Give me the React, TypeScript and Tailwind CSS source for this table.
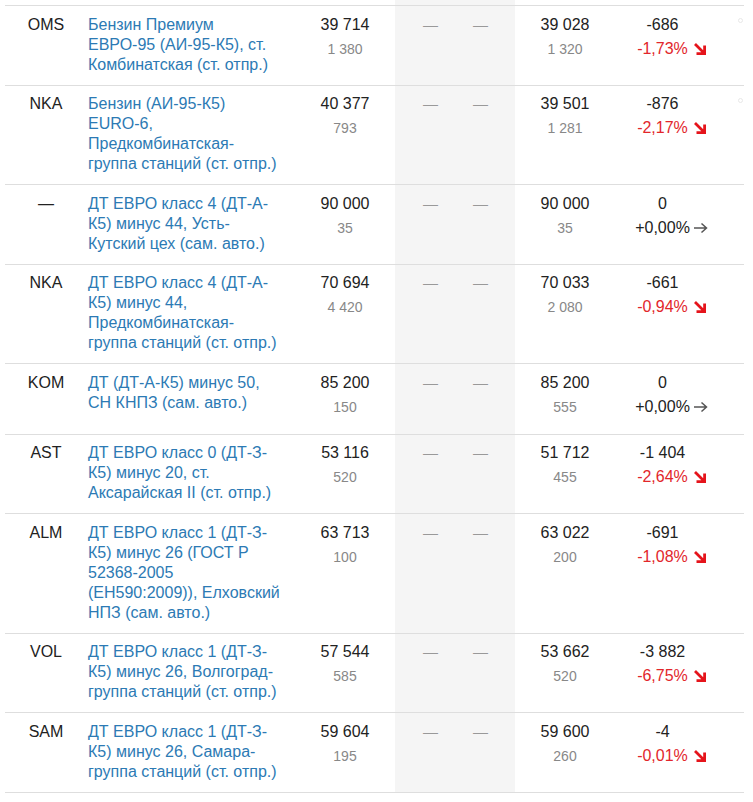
type Row = {
  code: string;
  name: string;
  price: string;
  vol: string;
  newPrice: string;
  newVol: string;
  delta: string;
  pct: string;
  dir: "down" | "flat";
  dot?: boolean;
};

const ROWS: Row[] = [
  { code: "OMS", name: "Бензин Премиум ЕВРО-95 (АИ-95-К5), ст. Комбинатская (ст. отпр.)", price: "39 714", vol: "1 380", newPrice: "39 028", newVol: "1 320", delta: "-686", pct: "-1,73%", dir: "down", dot: true },
  { code: "NKA", name: "Бензин (АИ-95-К5) EURO-6, Предкомбинатская-группа станций (ст. отпр.)", price: "40 377", vol: "793", newPrice: "39 501", newVol: "1 281", delta: "-876", pct: "-2,17%", dir: "down", dot: true },
  { code: "—", name: "ДТ ЕВРО класс 4 (ДТ-А-К5) минус 44, Усть-Кутский цех (сам. авто.)", price: "90 000", vol: "35", newPrice: "90 000", newVol: "35", delta: "0", pct: "+0,00%", dir: "flat" },
  { code: "NKA", name: "ДТ ЕВРО класс 4 (ДТ-А-К5) минус 44, Предкомбинатская-группа станций (ст. отпр.)", price: "70 694", vol: "4 420", newPrice: "70 033", newVol: "2 080", delta: "-661", pct: "-0,94%", dir: "down" },
  { code: "KOM", name: "ДТ (ДТ-А-К5) минус 50, СН КНПЗ (сам. авто.)", price: "85 200", vol: "150", newPrice: "85 200", newVol: "555", delta: "0", pct: "+0,00%", dir: "flat" },
  { code: "AST", name: "ДТ ЕВРО класс 0 (ДТ-З-К5) минус 20, ст. Аксарайская II (ст. отпр.)", price: "53 116", vol: "520", newPrice: "51 712", newVol: "455", delta: "-1 404", pct: "-2,64%", dir: "down" },
  { code: "ALM", name: "ДТ ЕВРО класс 1 (ДТ-З-К5) минус 26 (ГОСТ Р 52368-2005 (ЕН590:2009)), Елховский НПЗ (сам. авто.)", price: "63 713", vol: "100", newPrice: "63 022", newVol: "200", delta: "-691", pct: "-1,08%", dir: "down" },
  { code: "VOL", name: "ДТ ЕВРО класс 1 (ДТ-З-К5) минус 26, Волгоград-группа станций (ст. отпр.)", price: "57 544", vol: "585", newPrice: "53 662", newVol: "520", delta: "-3 882", pct: "-6,75%", dir: "down" },
  { code: "SAM", name: "ДТ ЕВРО класс 1 (ДТ-З-К5) минус 26, Самара-группа станций (ст. отпр.)", price: "59 604", vol: "195", newPrice: "59 600", newVol: "260", delta: "-4", pct: "-0,01%", dir: "down" },
];

function ArrowDown() {
  return (
    <svg width="14" height="14" viewBox="0 0 14 14" className="absolute left-full top-1/2 ml-[5px] -translate-y-1/2">
      <path d="M2 2 L11 11 M3.5 11.6 H11.6 V3.5" fill="none" stroke="#e5141b" strokeWidth="2.8" />
    </svg>
  );
}

function ArrowRight() {
  return (
    <svg width="15" height="12" viewBox="0 0 15 12" className="absolute left-full top-1/2 ml-[3px] -translate-y-1/2">
      <path d="M1 6 H13.5 M8.5 1.5 L13.5 6 L8.5 10.5" fill="none" stroke="#555" strokeWidth="1.5" />
    </svg>
  );
}

function PriceCell({ price, vol }: { price: string; vol: string }) {
  return (
    <div className="w-[100px] shrink-0 pt-[8.5px] pb-[10px] text-center">
      <div className="min-h-[51px]">
        <div className="text-[16px] leading-5 text-[#222]">{price}</div>
        <div className="mt-1 text-[14px] leading-5 text-[#888]">{vol}</div>
      </div>
    </div>
  );
}

function TableRow({ row }: { row: Row }) {
  return (
    <div className="flex border-b border-[#dedede]">
      <div className="w-[82px] shrink-0 pt-[8.5px] pb-[10px] text-center text-[16px] leading-5 text-[#222]">
        {row.code}
      </div>
      <div className="w-[208px] shrink-0 pt-[8.5px] pb-[10px] pl-[1px] pr-[14px] text-[16px] leading-5 text-[#2c7ab4]">
        {row.name}
      </div>
      <PriceCell price={row.price} vol={row.vol} />
      <div className="w-[60px] shrink-0 bg-[#f5f5f5] pt-[8.5px] pl-[28px] text-[15px] leading-5 text-[#999]">—</div>
      <div className="w-[60px] shrink-0 bg-[#f5f5f5] pt-[8.5px] pl-[18px] text-[15px] leading-5 text-[#999]">—</div>
      <PriceCell price={row.newPrice} vol={row.newVol} />
      <div className="w-[95px] shrink-0 pt-[8.5px] pb-[10px] text-center">
        <div className="text-[16px] leading-5 text-[#222]">{row.delta}</div>
        <div className="mt-1 text-[16px] leading-5">
          <span className={`relative inline-block ${row.dir === "down" ? "text-[#e2262b]" : "text-[#222]"}`}>
            {row.pct}
            {row.dir === "down" ? <ArrowDown /> : <ArrowRight />}
          </span>
        </div>
      </div>
      <div className="w-[34px] shrink-0 pt-3">
        {row.dot && <div className="ml-[28px] h-[5px] w-[5px] rounded-full border border-[#e8e8e8]" />}
      </div>
    </div>
  );
}

export default function App() {
  return (
    <div className="min-h-screen bg-white font-['Liberation_Sans',Arial,sans-serif]">
      <div className="w-[744px] pl-[5px]">
        {/* top edge of previous row */}
        <div className="flex h-[6px] border-b border-[#dedede]">
          <div className="w-[390px] shrink-0" />
          <div className="w-[120px] shrink-0 bg-[#f5f5f5]" />
        </div>
        {ROWS.map((row, i) => (
          <TableRow key={i} row={row} />
        ))}
      </div>
    </div>
  );
}
